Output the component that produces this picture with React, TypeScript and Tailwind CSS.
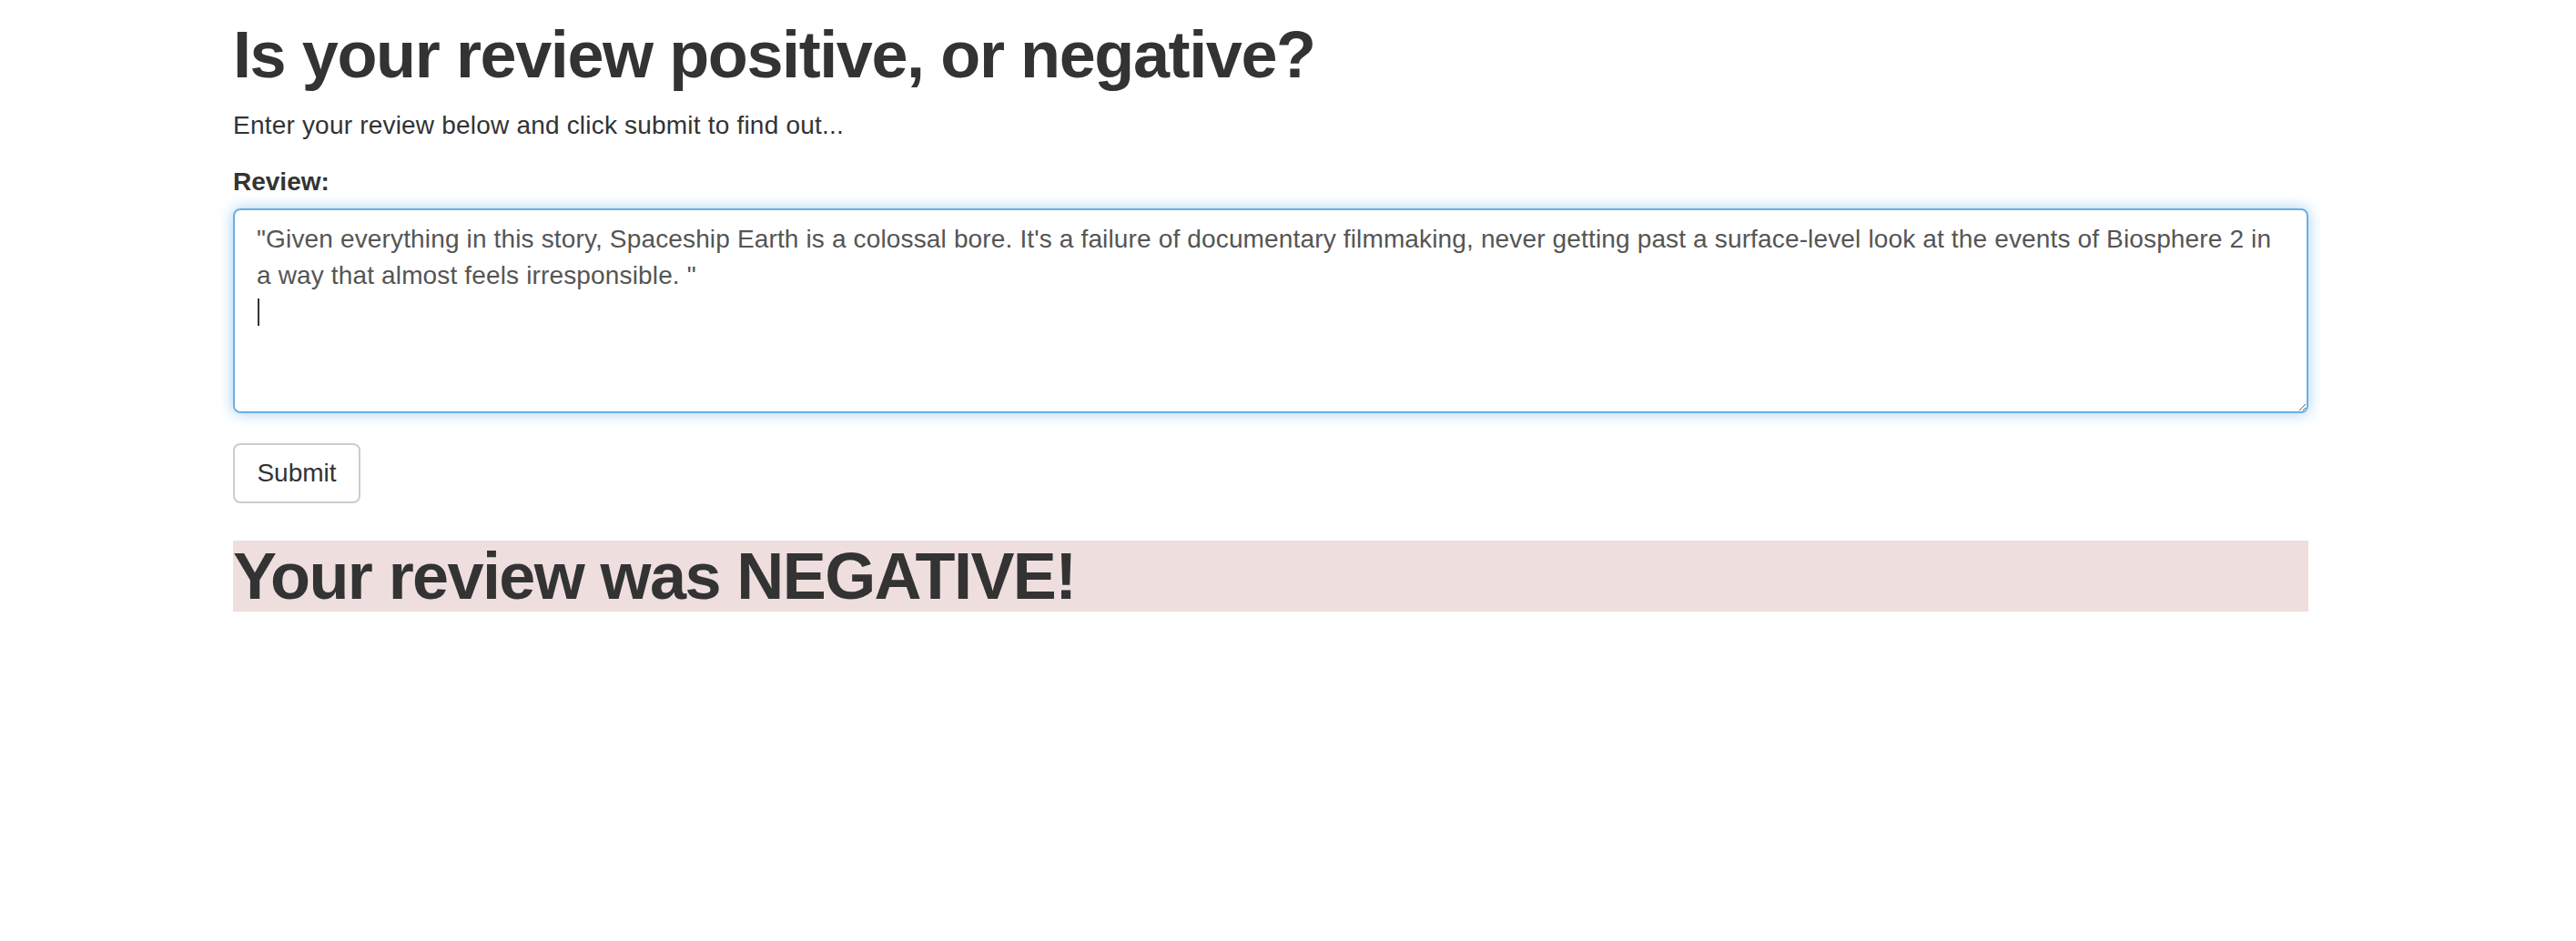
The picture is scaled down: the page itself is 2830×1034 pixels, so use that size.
import React from 'react';

const review =
  "\"Given everything in this story, Spaceship Earth is a colossal bore. It's a failure of documentary filmmaking, never getting past a surface-level look at the events of Biosphere 2 in a way that almost feels irresponsible. \"\n";

export default function App() {
  return (
    <div className="min-h-[1034px] bg-white font-['Liberation_Sans',Arial,sans-serif] text-[#333]">
      <div className="ml-[256px] w-[2280px] pt-[21px]">
        <h1 className="text-[72px] font-bold leading-[79px] tracking-[-1.4px]">Is your review positive, or negative?</h1>
        <p className="mt-[18px] text-[28px] leading-[40px] tracking-[0.2px]">Enter your review below and click submit to find out...</p>

        <form className="mt-[22px]" onSubmit={(e) => e.preventDefault()}>
          <label htmlFor="review" className="block text-[28px] font-bold leading-[40px]">
            Review:
          </label>
          <div className="relative mt-[9px]">
            <textarea
              id="review"
              defaultValue={review}
              className="block h-[225px] w-full resize-y rounded-[8px] border-2 border-[#66afe9] px-[24px] py-[12px] text-[28px] leading-[40px] tracking-[0.15px] text-[#555] shadow-[0_0_16px_rgba(102,175,233,0.6)] outline-none"
            />
            {/* text cursor sitting on the empty third line */}
            <span className="pointer-events-none absolute left-[27px] top-[99px] h-[30px] w-[2px] bg-[#333]" />
          </div>
          <button
            type="submit"
            className="mt-[33px] block h-[66px] w-[140px] rounded-[8px] border-2 border-[#ccc] bg-white text-[28px] text-[#333]"
          >
            Submit
          </button>
        </form>

        <h1 className="mt-[41px] bg-[#efdede] text-[72px] font-bold leading-[78px] tracking-[-1.6px]">Your review was NEGATIVE!</h1>
      </div>
    </div>
  );
}
